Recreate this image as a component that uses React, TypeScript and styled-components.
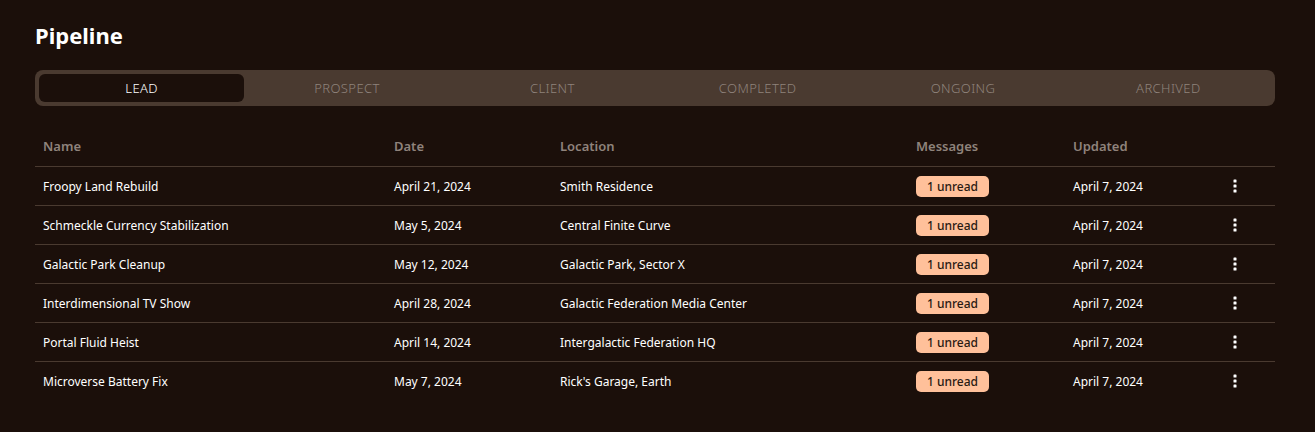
import React, { useState } from "react"
import styled, { createGlobalStyle } from "styled-components"

const GlobalStyle = createGlobalStyle`
  html, body {
    margin: 0;
    padding: 0;
    background: #1b0f0a;
  }
  body {
    font-family: "Noto Sans", "Open Sans", sans-serif;
    color: #ffffff;
  }
`

const tabs = ["Lead", "Prospect", "Client", "Completed", "Ongoing", "Archived"]

const columns = [
  { label: "Name", width: 351 },
  { label: "Date", width: 166 },
  { label: "Location", width: 356 },
  { label: "Messages", width: 157 },
  { label: "Updated", width: 160 },
  { label: "", width: 50 },
]

const rows = [
  { name: "Froopy Land Rebuild", date: "April 21, 2024", location: "Smith Residence" },
  { name: "Schmeckle Currency Stabilization", date: "May 5, 2024", location: "Central Finite Curve" },
  { name: "Galactic Park Cleanup", date: "May 12, 2024", location: "Galactic Park, Sector X" },
  { name: "Interdimensional TV Show", date: "April 28, 2024", location: "Galactic Federation Media Center" },
  { name: "Portal Fluid Heist", date: "April 14, 2024", location: "Intergalactic Federation HQ" },
  { name: "Microverse Battery Fix", date: "May 7, 2024", location: "Rick's Garage, Earth" },
]

const App = () => {
  const [active, setActive] = useState(0)
  return (
    <Page>
      <GlobalStyle />
      <Title>Pipeline</Title>
      <TabBar>
        {tabs.map((t, i) => (
          <Tab key={t} $active={i === active} onClick={() => setActive(i)}>
            {t}
          </Tab>
        ))}
      </TabBar>
      <Table>
        <colgroup>
          {columns.map((c, i) => (
            <col key={i} style={{ width: c.width }} />
          ))}
        </colgroup>
        <thead>
          <tr>
            {columns.map((c, i) => (
              <Th key={i}>{c.label}</Th>
            ))}
          </tr>
        </thead>
        <tbody>
          {rows.map((r) => (
            <Row key={r.name}>
              <Td>{r.name}</Td>
              <Td>{r.date}</Td>
              <Td>{r.location}</Td>
              <Td>
                <Badge>1 unread</Badge>
              </Td>
              <Td>April 7, 2024</Td>
              <Td>
                <MoreButton aria-label="More">
                  <svg width="4" height="14" viewBox="0 0 4 14">
                    <rect x="0.5" y="0.5" width="3" height="3" rx="0.6" fill="#fff" />
                    <rect x="0.5" y="5.5" width="3" height="3" rx="0.6" fill="#fff" />
                    <rect x="0.5" y="10.5" width="3" height="3" rx="0.6" fill="#fff" />
                  </svg>
                </MoreButton>
              </Td>
            </Row>
          ))}
        </tbody>
      </Table>
    </Page>
  )
}

const Page = styled.div`
  padding: 20px 40px 30px 35px;
  min-height: 432px;
  box-sizing: border-box;
`

const Title = styled.h1`
  margin: 0 0 20px;
  font-size: 22px;
  font-weight: 700;
  line-height: 30px;
`

const TabBar = styled.div`
  display: grid;
  grid-template-columns: repeat(6, 1fr);
  padding: 4px;
  background: #4a3a30;
  border-radius: 8px;
`

const Tab = styled.button<{ $active: boolean }>`
  height: 28px;
  border: none;
  border-radius: 6px;
  background: ${(p) => (p.$active ? "#1b0f0a" : "transparent")};
  color: ${(p) => (p.$active ? "#ffffff" : "#8f837c")};
  font-family: inherit;
  font-size: 13px;
  font-weight: 300;
  letter-spacing: 0.4px;
  text-transform: uppercase;
  cursor: pointer;
`

const Table = styled.table`
  width: 100%;
  margin-top: 20px;
  border-collapse: collapse;
  table-layout: fixed;
  font-size: 12px;
`

const Th = styled.th`
  height: 40px;
  padding: 0 8px;
  text-align: left;
  font-size: 13px;
  font-weight: 600;
  color: #8f837c;
  border-bottom: 1px solid #4a3a30;
`

const Row = styled.tr`
  border-bottom: 1px solid #4a3a30;
  &:last-child {
    border-bottom: none;
  }
`

const Td = styled.td`
  height: 38px;
  padding: 0 8px;
  color: #ffffff;
  white-space: nowrap;
`

const Badge = styled.span`
  display: inline-block;
  padding: 2px 11px;
  line-height: 17px;
  border-radius: 5px;
  background: #ffc09a;
  color: #2a1a12;
  font-size: 12px;
  font-weight: 500;
`

const MoreButton = styled.button`
  display: flex;
  align-items: center;
  padding: 0;
  border: none;
  background: none;
  cursor: pointer;
`

export default App
